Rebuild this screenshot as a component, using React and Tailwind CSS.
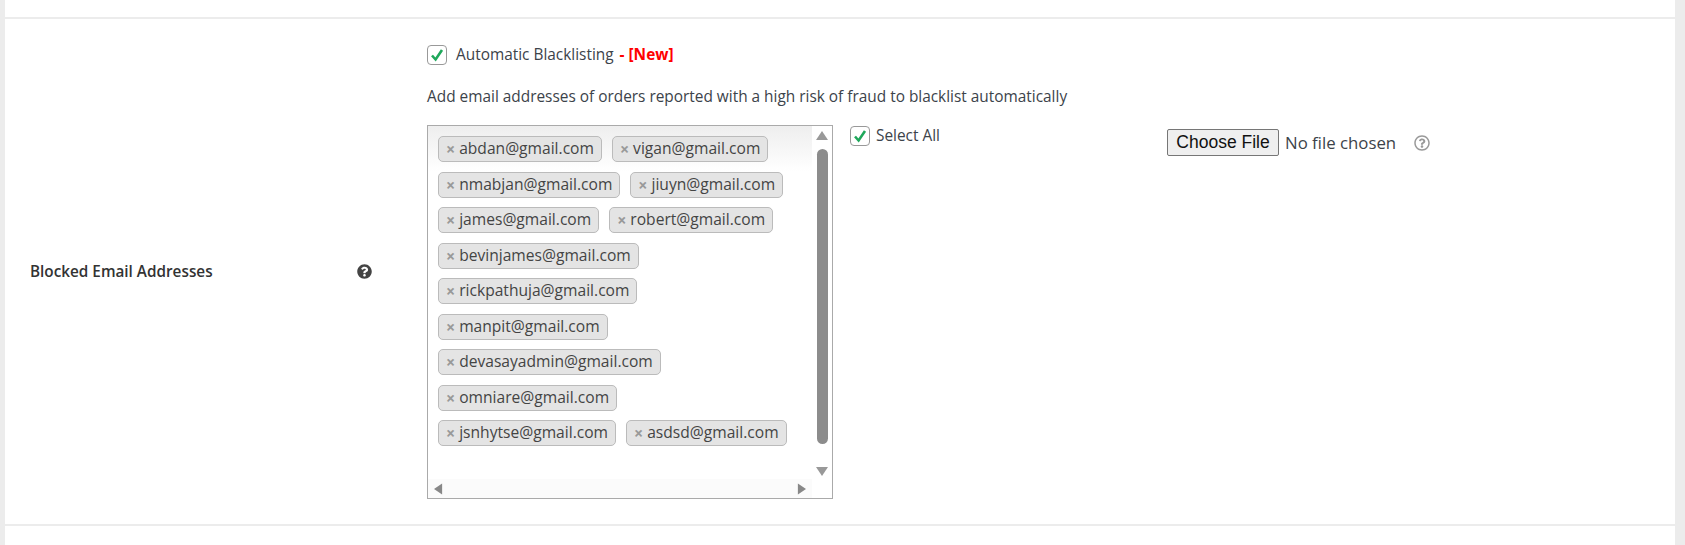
import { FaQuestionCircle, FaRegQuestionCircle } from "react-icons/fa";

const rows = [
  ["abdan@gmail.com", "vigan@gmail.com"],
  ["nmabjan@gmail.com", "jiuyn@gmail.com"],
  ["james@gmail.com", "robert@gmail.com"],
  ["bevinjames@gmail.com"],
  ["rickpathuja@gmail.com"],
  ["manpit@gmail.com"],
  ["devasayadmin@gmail.com"],
  ["omniare@gmail.com"],
  ["jsnhytse@gmail.com", "asdsd@gmail.com"],
];

function Check() {
  return (
    <span className="w-5 h-5 shrink-0 flex items-center justify-center bg-white border border-[#999] rounded-[4px]">
      <svg viewBox="0 0 16 16" className="w-4 h-4">
        <path d="M3 8.5 L6.6 12.5 L13 3" fill="none" stroke="#1fa85b" strokeWidth="2.6" />
      </svg>
    </span>
  );
}

function Tag({ email }) {
  return (
    <span className="h-[26px] flex items-center px-[7px] bg-[#e4e4e4] border border-[#bbb] rounded-[5px] text-[#444]">
      <span className="text-[#999] font-bold text-[16px] mr-[4px] leading-none">×</span>
      {email}
    </span>
  );
}

export default function App() {
  return (
    <div className="h-[545px] bg-white flex justify-between font-['Open_Sans',sans-serif] text-[#3c434a] overflow-hidden">
      <div className="w-[5px] bg-[#ececec]" />
      <div className="flex-1 pt-[17px]">
        <div className="border-y-2 border-[#ececec] h-[509px] flex">
          <div className="w-[397px] pl-[25px] flex items-center self-center -mt-[1px]">
            <span className="w-[327px] text-[15.3px] font-semibold text-[#333]">Blocked Email Addresses</span>
            <FaQuestionCircle className="w-[15px] h-[15px] text-[#444]" />
          </div>
          <div className="pl-[25px] pt-[26px]">
            <div className="flex items-center h-5">
              <Check />
              <span className="ml-[9px] text-[15.4px]">Automatic Blacklisting</span>
              <span className="ml-[6px] text-[15.4px] font-bold text-[#ff0000]">- [New]</span>
            </div>
            <p className="mt-[22px] text-[15.4px] leading-5 whitespace-nowrap">
              Add email addresses of orders reported with a high risk of fraud to blacklist automatically
            </p>
            <div className="flex mt-[18px]">
              <div className="w-[406px] h-[374px] shrink-0 border border-[#aaa] flex flex-col bg-white text-[15.6px]">
                <div className="flex flex-1 min-h-0">
                  <div className="flex-1 pt-[10px] pl-[10px] flex flex-col gap-[9.5px] bg-gradient-to-b from-[#eeeeee] to-white to-[45px]">
                    {rows.map((row, i) => (
                      <div key={i} className="flex gap-[10px]">
                        {row.map((email) => (
                          <Tag key={email} email={email} />
                        ))}
                      </div>
                    ))}
                  </div>
                  <div className="w-[20px] flex flex-col items-center pt-[5px] pb-[3px] bg-white">
                    <svg viewBox="0 0 12 10" className="w-3 h-[10px] shrink-0"><path d="M6 0 L12 9 L0 9 Z" fill="#999" /></svg>
                    <div className="w-[11px] h-[295px] mt-[8px] rounded-full bg-[#8c8c8c]" />
                    <svg viewBox="0 0 12 10" className="w-3 h-[10px] shrink-0 mt-auto"><path d="M6 10 L12 1 L0 1 Z" fill="#999" /></svg>
                  </div>
                </div>
                <div className="h-[19px] flex">
                  <div className="flex-1 bg-[#fbfbfb] flex items-center justify-between px-[6px]">
                    <svg viewBox="0 0 10 12" className="w-[9px] h-3"><path d="M0 6 L9 0 L9 12 Z" fill="#888" /></svg>
                    <svg viewBox="0 0 10 12" className="w-[9px] h-3"><path d="M10 6 L1 0 L1 12 Z" fill="#888" /></svg>
                  </div>
                  <div className="w-[20px]" />
                </div>
              </div>
              <div className="ml-[17px] mt-[1px] w-[317px] shrink-0 flex items-start">
                <Check />
                <span className="ml-[6px] text-[15.4px] leading-5">Select All</span>
              </div>
              <div className="mt-[4px] flex items-start">
                <button className="w-[112px] h-[27px] bg-[#efefef] border border-[#767676] rounded-[2px] text-[#111] text-[17.5px] leading-none font-['Liberation_Sans',sans-serif]">
                  Choose File
                </button>
                <span className="ml-[6px] text-[16.8px] leading-[27px] whitespace-nowrap">No file chosen</span>
                <FaRegQuestionCircle className="ml-[18px] mt-[6px] w-4 h-4 text-[#999]" />
              </div>
            </div>
          </div>
        </div>
      </div>
      <div className="w-[10px] bg-[#ececec]" />
    </div>
  );
}
